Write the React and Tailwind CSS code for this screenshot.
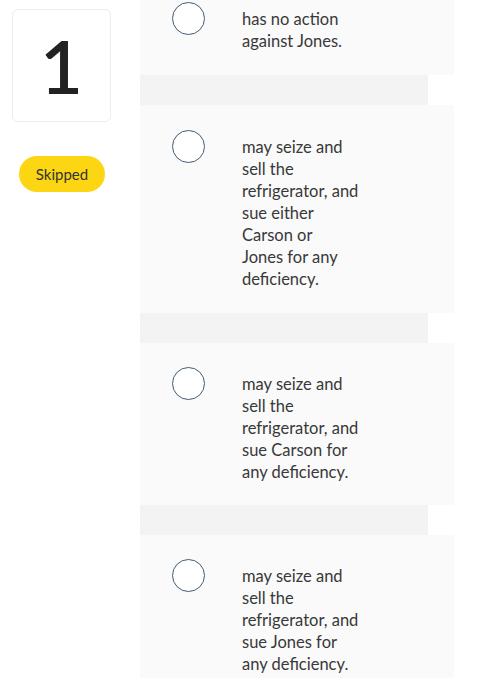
import React from "react";

const options = [
  { lines: ["has no action", "against Jones."], cls: "pt-[2px] pb-[23px]" },
  { lines: ["may seize and", "sell the", "refrigerator, and", "sue either", "Carson or", "Jones for any", "deficiency."], cls: "pt-[25px] pb-[23px]" },
  { lines: ["may seize and", "sell the", "refrigerator, and", "sue Carson for", "any deficiency."], cls: "pt-[24px] pb-[22px]" },
  { lines: ["may seize and", "sell the", "refrigerator, and", "sue Jones for", "any deficiency."], cls: "pt-[24px] pb-[3px]" },
];

function Option({ lines, cls }) {
  return (
    <div className={`flex items-start bg-[#fafafa] pl-[32px] ${cls}`}>
      <div className="w-[33px] h-[33px] shrink-0 rounded-full border-[1.5px] border-[#3f5b74] bg-white" />
      <div className="ml-[37px] mt-[6px] w-[150px] text-[16.5px] leading-[22px] text-[#383838] whitespace-nowrap font-['Lato',sans-serif]">
        {lines.map((l, i) => (
          <div key={i}>{l}</div>
        ))}
      </div>
    </div>
  );
}

export default function App() {
  return (
    <div className="flex w-[501px] h-[700px] bg-white font-['Open_Sans',sans-serif] overflow-hidden">
      <div className="w-[140px] shrink-0 flex flex-col">
        <div className="ml-[12px] mt-[9px] w-[99px] h-[113px] rounded-[6px] border border-[#ececec] bg-white flex items-center justify-center">
          <span className="text-[74px] leading-none text-[#222] font-['Lato',sans-serif] font-semibold">1</span>
        </div>
        <div className="ml-[19px] mt-[34px] w-[86px] h-[36px] rounded-full bg-[#fcd612] flex items-center justify-center text-[15px] text-[#333] font-['Lato',sans-serif]">
          Skipped
        </div>
      </div>
      <div className="w-[314px] flex flex-col">
        {options.map((o, i) => (
          <React.Fragment key={i}>
            {i > 0 && <div className="h-[30px] w-[288px] bg-[#f3f3f3]" />}
            <Option lines={o.lines} cls={o.cls} />
          </React.Fragment>
        ))}
      </div>
    </div>
  );
}
